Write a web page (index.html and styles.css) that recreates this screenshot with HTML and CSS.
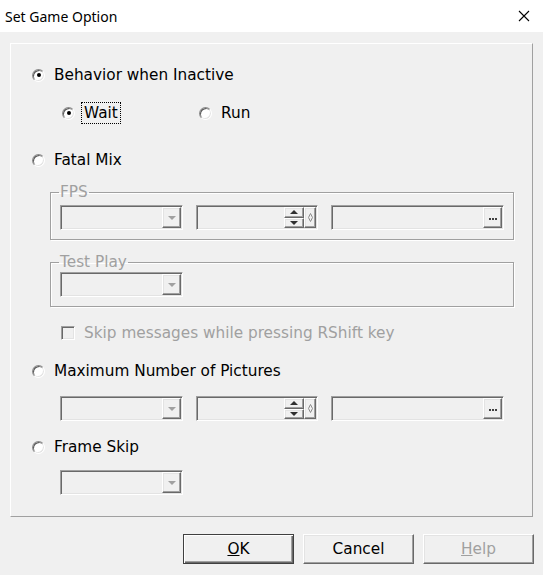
FILE: index.html
```html
<!DOCTYPE html>
<html>
<head>
	<title>Set Game Option</title>
	<link rel="stylesheet" href="styles.css">
</head>
<body>
	<div class="titlebar">
		<span class="title">Set Game Option</span>
		<svg class="close" width="12" height="12" viewBox="0 0 12 12">
			<path d="M1 1 L11 11 M11 1 L1 11" stroke="#000" stroke-width="1.1" fill="none"/>
		</svg>
	</div>

	<div class="panel">
		<div class="opt first"><span class="radio on"></span><span>Behavior when Inactive</span></div>
		<div class="subrow">
			<div class="opt wide"><span class="radio on"></span><span class="focus">Wait</span></div>
			<div class="opt"><span class="radio"></span><span>Run</span></div>
		</div>

		<div class="opt gap-l"><span class="radio"></span><span>Fatal Mix</span></div>
		<fieldset class="group fps">
			<legend>FPS</legend>
			<div class="controls">
				<div class="field combo"><span class="btn-arrow"></span></div>
				<div class="field spin">
					<span class="spin-btns"><span class="spin-up"></span><span class="spin-down"></span></span>
					<span class="diamond">
						<svg width="5" height="9" viewBox="0 0 5 9"><path d="M2.5 0.5 L4.5 4.5 L2.5 8.5 L0.5 4.5 Z" fill="none" stroke="#8a8a8a" stroke-width="1"/></svg>
					</span>
				</div>
				<div class="field browse"><span class="btn-dots"><i></i><i></i><i></i></span></div>
			</div>
		</fieldset>
		<fieldset class="group test">
			<legend>Test Play</legend>
			<div class="field combo"><span class="btn-arrow"></span></div>
		</fieldset>
		<div class="check-row"><span class="checkbox"></span><span class="disabled">Skip messages while pressing RShift key</span></div>

		<div class="opt gap-m"><span class="radio"></span><span>Maximum Number of Pictures</span></div>
		<div class="controls indent">
			<div class="field combo"><span class="btn-arrow"></span></div>
			<div class="field spin">
				<span class="spin-btns"><span class="spin-up"></span><span class="spin-down"></span></span>
				<span class="diamond">
					<svg width="5" height="9" viewBox="0 0 5 9"><path d="M2.5 0.5 L4.5 4.5 L2.5 8.5 L0.5 4.5 Z" fill="none" stroke="#8a8a8a" stroke-width="1"/></svg>
				</span>
			</div>
			<div class="field browse"><span class="btn-dots"><i></i><i></i><i></i></span></div>
		</div>

		<div class="opt gap-s"><span class="radio"></span><span>Frame Skip</span></div>
		<div class="field combo indent last"><span class="btn-arrow"></span></div>
	</div>

	<div class="buttons">
		<button class="btn default"><u>O</u>K</button>
		<button class="btn">Cancel</button>
		<button class="btn" disabled><u>H</u>elp</button>
	</div>
</body>
</html>
```

FILE: styles.css
```css
body {
	margin: 0;
	background: #f0f0f0;
	font-family: "DejaVu Sans", sans-serif;
	font-size: 15.3px;
	color: #000;
}

/* window caption */
.titlebar {
	height: 32px;
	background: #fff;
	display: flex;
	align-items: center;
	justify-content: space-between;
	padding: 0 13px 0 5px;
}
.title {
	font-family: "Noto Sans", sans-serif;
	font-size: 14px;
}

/* framed area holding all the options */
.panel {
	box-sizing: border-box;
	margin: 11px 10px 0 10px;
	width: 523px;
	height: 474px;
	border: 1px solid;
	border-color: #fff #a0a0a0 #a0a0a0 #fff;
	padding: 19px 0 0 21px;
}

.opt {
	display: flex;
	align-items: center;
	gap: 9px;
	height: 24px;
}
.subrow {
	display: flex;
	margin: 14px 0 0 30px;
}
.opt.wide { width: 137px; }
.gap-l { margin-top: 23px; }
.gap-m { margin-top: 14px; }
.gap-s { margin-top: 14px; }

.radio {
	box-sizing: border-box;
	width: 13px;
	height: 13px;
	border-radius: 50%;
	border: 1px solid;
	border-color: #8a8a8a #fff #fff #8a8a8a;
	box-shadow: inset 1px 1px 0 #5a5a5a, inset -1px -1px 0 #e3e3e3;
	background: #fff;
	display: flex;
	align-items: center;
	justify-content: center;
	flex: none;
}
.radio.on::after {
	content: '';
	width: 4px;
	height: 4px;
	border-radius: 50%;
	background: #000;
}
.focus {
	outline: 1px dotted #000;
	outline-offset: 1px;
	padding: 0 1px;
	margin-left: -1px;
}

/* etched group boxes */
.group {
	margin: 12px 18px 0 18px;
	padding: 5px 9px 9px 9px;
	border: 1px solid #a0a0a0;
	box-shadow: inset 1px 1px 0 #fff, 1px 1px 0 #fff;
	min-width: 0;
}
.group legend {
	padding: 0 1px;
	margin-left: -1px;
	line-height: 16px;
	color: #a0a0a0;
}
.group.test {
	margin-top: 14px;
	padding-top: 2px;
}

.controls {
	display: flex;
	gap: 13px;
}
.controls.indent,
.field.indent {
	margin-left: 28px;
}
.controls.indent { margin-top: 13px; }
.field.last { margin-top: 11px; }

/* sunken edit / combo fields */
.field {
	box-sizing: border-box;
	height: 25px;
	border: 1px solid;
	border-color: #a0a0a0 #fff #fff #a0a0a0;
	box-shadow: inset 1px 1px 0 #696969, inset -1px -1px 0 #e3e3e3;
	background: #f0f0f0;
	padding: 1px;
	display: flex;
	justify-content: flex-end;
}
.field.combo { width: 123px; }
.field.spin { width: 122px; }
.field.browse { width: 173px; }

.btn-arrow,
.btn-dots,
.spin-up,
.spin-down,
.diamond {
	box-sizing: border-box;
	border: 1px solid;
	border-color: #fff #696969 #696969 #fff;
	box-shadow: inset -1px -1px 0 #a0a0a0, inset 1px 1px 0 #e3e3e3;
	background: #f0f0f0;
	display: flex;
	align-items: center;
	justify-content: center;
}
.btn-arrow { width: 19px; }
.btn-arrow::after {
	content: '';
	border-left: 4px solid transparent;
	border-right: 4px solid transparent;
	border-top: 4px solid #a0a0a0;
	margin-top: 1px;
}

.spin-btns {
	display: flex;
	flex-direction: column;
	width: 20px;
}
.spin-up,
.spin-down { flex: 1; }
.spin-up::after {
	content: '';
	border-left: 4px solid transparent;
	border-right: 4px solid transparent;
	border-bottom: 4px solid #303030;
}
.spin-down::after {
	content: '';
	border-left: 4px solid transparent;
	border-right: 4px solid transparent;
	border-top: 4px solid #303030;
}
.diamond { width: 12px; }

.btn-dots {
	width: 19px;
	gap: 1px;
	padding-top: 2px;
}
.btn-dots i {
	width: 2px;
	height: 2px;
	background: #404040;
}

.check-row {
	display: flex;
	align-items: center;
	gap: 9px;
	height: 24px;
	margin: 14px 0 0 29px;
}
.checkbox {
	box-sizing: border-box;
	width: 14px;
	height: 14px;
	border: 1px solid;
	border-color: #a0a0a0 #fff #fff #a0a0a0;
	box-shadow: inset 1px 1px 0 #696969, inset -1px -1px 0 #e3e3e3;
	background: #f0f0f0;
}
.disabled { color: #a0a0a0; }

/* dialog buttons */
.buttons {
	display: flex;
	gap: 9px;
	margin: 17px 0 0 183px;
}
.btn {
	box-sizing: border-box;
	width: 111px;
	height: 30px;
	font: inherit;
	color: #000;
	background: #f0f0f0;
	border: 1px solid;
	border-color: #fff #696969 #696969 #fff;
	box-shadow: inset -1px -1px 0 #a0a0a0, inset 1px 1px 0 #e3e3e3;
	padding: 0;
}
.btn.default {
	border-color: #404040;
	box-shadow: inset 1px 1px 0 #fff, inset -1px -1px 0 #696969, inset -2px -2px 0 #a0a0a0;
}
.btn:disabled { color: #a0a0a0; }
```
